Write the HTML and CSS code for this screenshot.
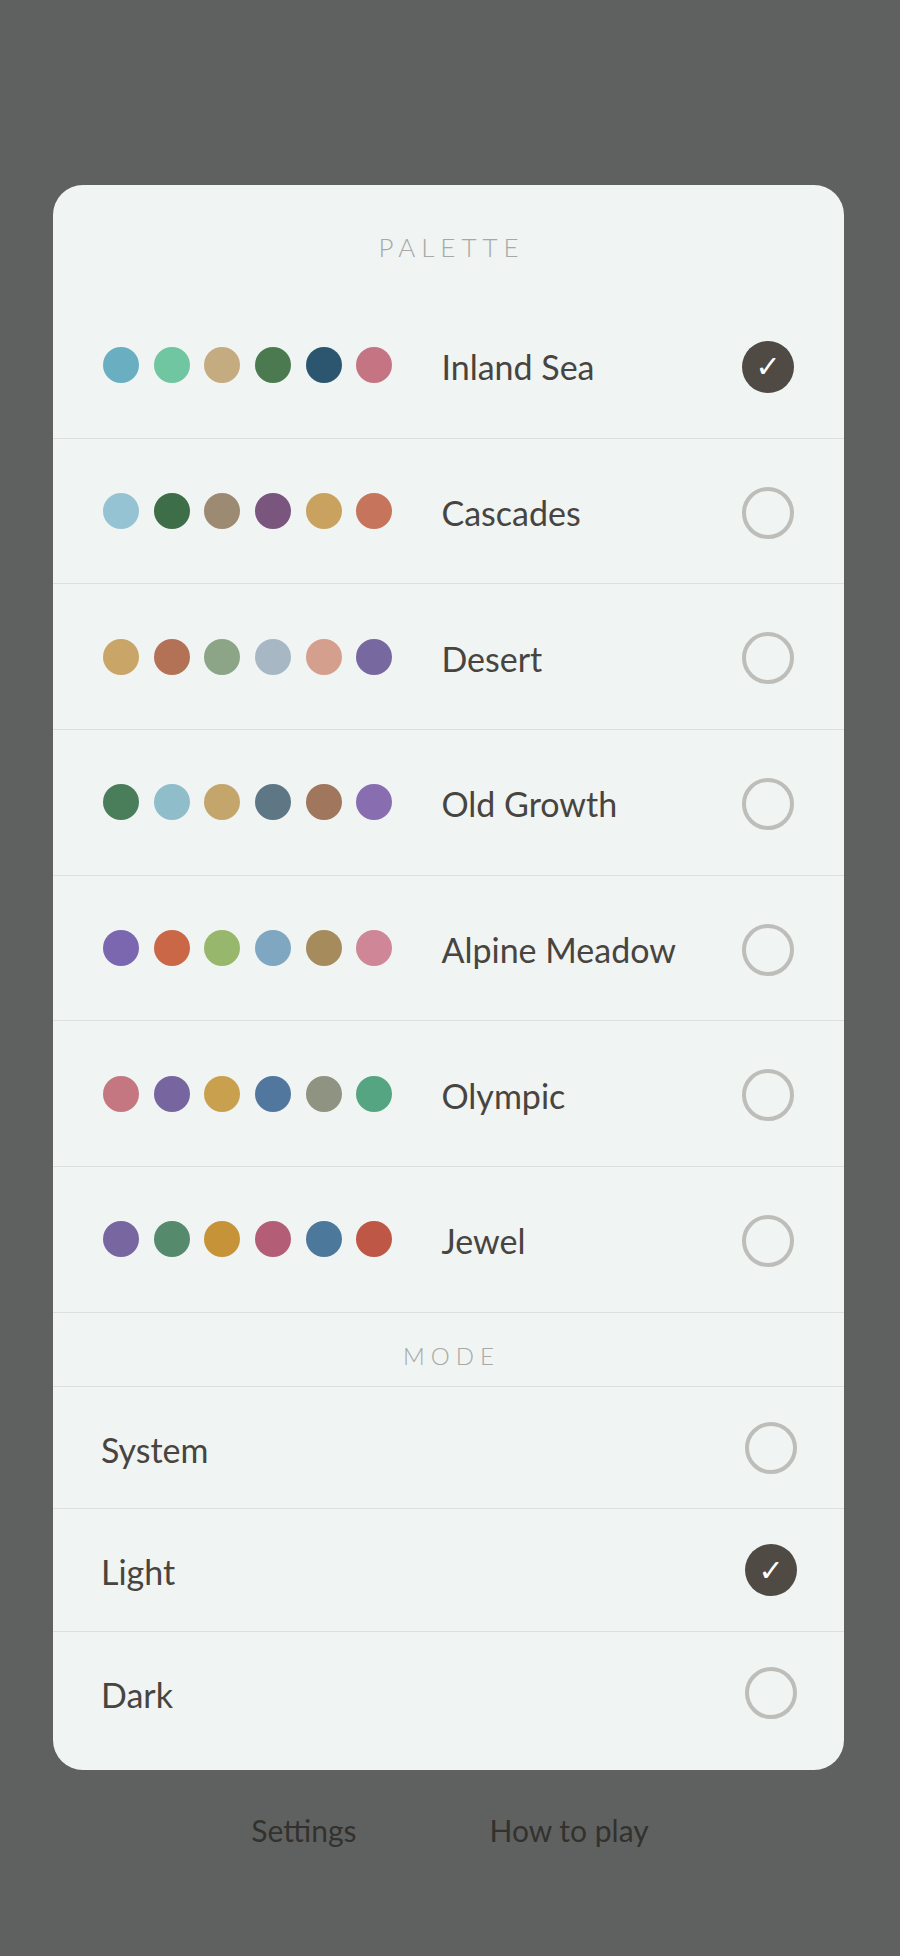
FILE: index.html
```html
<!DOCTYPE html>
<html lang="en">
<head>
  <meta charset="UTF-8" />
  <meta name="viewport" content="width=device-width, initial-scale=1.0"/>
  <title>Palette</title>
  <link rel="stylesheet" href="styles.css">
</head>
<body>

  <div class="sheet">
    <div class="section-title palette-title">PALETTE</div>

    <div class="palette-row">
      <div class="swatches">
        <span class="dot" style="background:#6aaec2"></span>
        <span class="dot" style="background:#6fc6a1"></span>
        <span class="dot" style="background:#c4ab80"></span>
        <span class="dot" style="background:#4b7a50"></span>
        <span class="dot" style="background:#2c5670"></span>
        <span class="dot" style="background:#c47482"></span>
      </div>
      <div class="label">Inland Sea</div>
      <span class="radio checked">✓</span>
    </div>

    <div class="palette-row">
      <div class="swatches">
        <span class="dot" style="background:#96c3d3"></span>
        <span class="dot" style="background:#3e6e48"></span>
        <span class="dot" style="background:#9d8a73"></span>
        <span class="dot" style="background:#7a567f"></span>
        <span class="dot" style="background:#c9a25f"></span>
        <span class="dot" style="background:#c6755c"></span>
      </div>
      <div class="label">Cascades</div>
      <span class="radio"></span>
    </div>

    <div class="palette-row">
      <div class="swatches">
        <span class="dot" style="background:#c9a567"></span>
        <span class="dot" style="background:#b37256"></span>
        <span class="dot" style="background:#8ca587"></span>
        <span class="dot" style="background:#a7b8c4"></span>
        <span class="dot" style="background:#d59f8d"></span>
        <span class="dot" style="background:#7868a0"></span>
      </div>
      <div class="label">Desert</div>
      <span class="radio"></span>
    </div>

    <div class="palette-row">
      <div class="swatches">
        <span class="dot" style="background:#4a7d5a"></span>
        <span class="dot" style="background:#8fbdc9"></span>
        <span class="dot" style="background:#c4a66d"></span>
        <span class="dot" style="background:#5e7784"></span>
        <span class="dot" style="background:#a0775c"></span>
        <span class="dot" style="background:#886db0"></span>
      </div>
      <div class="label">Old Growth</div>
      <span class="radio"></span>
    </div>

    <div class="palette-row">
      <div class="swatches">
        <span class="dot" style="background:#7a67b0"></span>
        <span class="dot" style="background:#c96747"></span>
        <span class="dot" style="background:#97b76d"></span>
        <span class="dot" style="background:#7fa7c1"></span>
        <span class="dot" style="background:#a68b5c"></span>
        <span class="dot" style="background:#cf8696"></span>
      </div>
      <div class="label">Alpine Meadow</div>
      <span class="radio"></span>
    </div>

    <div class="palette-row">
      <div class="swatches">
        <span class="dot" style="background:#c47781"></span>
        <span class="dot" style="background:#76659e"></span>
        <span class="dot" style="background:#c9a04e"></span>
        <span class="dot" style="background:#52779e"></span>
        <span class="dot" style="background:#8f9381"></span>
        <span class="dot" style="background:#55a583"></span>
      </div>
      <div class="label">Olympic</div>
      <span class="radio"></span>
    </div>

    <div class="palette-row">
      <div class="swatches">
        <span class="dot" style="background:#7866a0"></span>
        <span class="dot" style="background:#568a6d"></span>
        <span class="dot" style="background:#c79338"></span>
        <span class="dot" style="background:#b45d77"></span>
        <span class="dot" style="background:#4c799b"></span>
        <span class="dot" style="background:#be5745"></span>
      </div>
      <div class="label">Jewel</div>
      <span class="radio"></span>
    </div>

    <div class="section-title mode-title">MODE</div>

    <div class="mode-row">
      <div class="label">System</div>
      <span class="radio"></span>
    </div>
    <div class="mode-row">
      <div class="label">Light</div>
      <span class="radio checked">✓</span>
    </div>
    <div class="mode-row last">
      <div class="label">Dark</div>
      <span class="radio"></span>
    </div>
  </div>

  <div class="footer-links">
    <a class="footer-link">Settings</a>
    <a class="footer-link">How to play</a>
  </div>

</body>
</html>
```

FILE: styles.css
```css
* {
  box-sizing: border-box;
}

body {
  margin: 0;
  min-height: 1956px;
  background-color: #5f6160;
  font-family: Lato, "Noto Sans", sans-serif;
  color: #48443f;
}

.sheet {
  width: 791px;
  margin: 185px 0 0 53px;
  padding-bottom: 16px;
  background: #f0f4f3;
  border-radius: 30px;
  overflow: hidden;
}

.section-title {
  display: flex;
  align-items: center;
  justify-content: center;
  font-size: 26px;
  font-weight: 300;
  letter-spacing: 6px;
  padding-left: 6px;
  color: #a6a9a7;
  border-bottom: 1.5px solid #dcdfde;
}

.palette-title {
  height: 108px;
  padding-top: 16px;
  border-bottom: none;
}

.mode-title {
  height: 74px;
  padding-top: 12px;
  font-size: 24px;
}

.palette-row {
  display: flex;
  align-items: center;
  height: 145.7px;
  padding: 0 50px;
  border-bottom: 1.5px solid #dcdfde;
}

.swatches {
  display: flex;
  gap: 14.7px;
  margin-right: 49px;
}

.dot {
  width: 36px;
  height: 36px;
  border-radius: 50%;
}

.label {
  flex: 1;
  font-size: 34px;
  line-height: 40px;
  padding-top: 4px;
}

.radio {
  display: flex;
  align-items: center;
  justify-content: center;
  width: 52px;
  height: 52px;
  border-radius: 50%;
  border: 4px solid #bdbdb9;
}

.radio.checked {
  border: none;
  background: #4f4a44;
  color: #ffffff;
  font-family: "DejaVu Sans", sans-serif;
  font-size: 30px;
}

.palette-row .radio {
  margin-top: 3px;
}

.mode-row {
  display: flex;
  align-items: center;
  height: 122.5px;
  padding: 0 47px 0 48px;
  border-bottom: 1.5px solid #dcdfde;
}

.mode-row.last {
  border-bottom: none;
}

.footer-links {
  display: flex;
  justify-content: center;
  gap: 133px;
  margin-top: 40px;
}

.footer-link {
  font-size: 30px;
  line-height: 40px;
  color: #33312d;
}
```
